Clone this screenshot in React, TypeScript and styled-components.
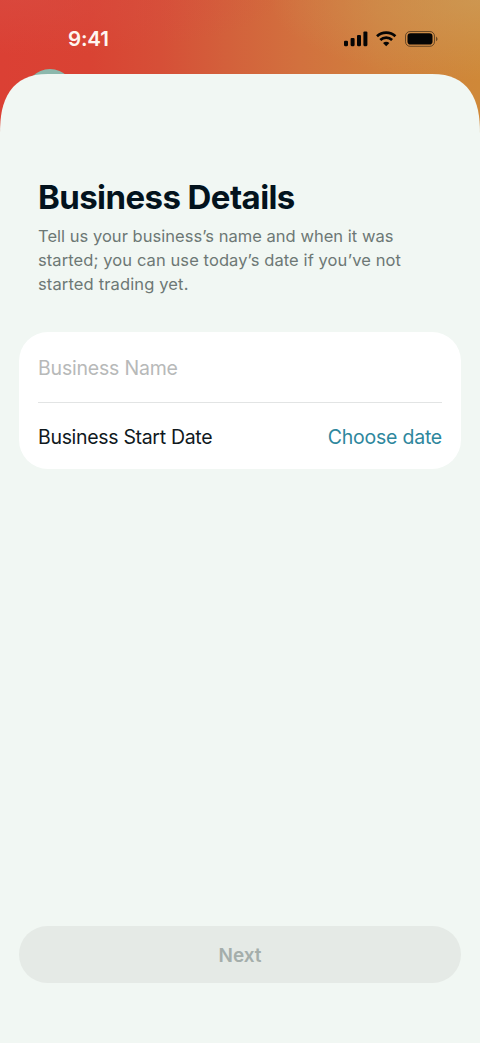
import React from "react";
import styled, { createGlobalStyle } from "styled-components";

const GlobalStyle = createGlobalStyle`
  * { box-sizing: border-box; }
  body { margin: 0; background: #f1f7f3; font-family: Inter, "Liberation Sans", sans-serif; }
`;

const Screen = styled.div`
  display: flex;
  flex-direction: column;
  width: 480px;
  height: 1043px;
  overflow: hidden;
  background:
    radial-gradient(ellipse 210px 80px at 480px 0, rgba(204, 160, 96, 0.6), rgba(204, 160, 96, 0)),
    radial-gradient(ellipse 260px 55px at 20px 0, rgba(216, 78, 68, 0.5), rgba(216, 78, 68, 0)),
    linear-gradient(90deg, #db4034 0, #d94333 90px, #d64f37 160px, #d3603b 225px, #d2713e 300px, #d07f3d 380px, #cf8838 480px);
`;

const StatusBar = styled.header`
  position: relative;
  display: flex;
  justify-content: space-between;
  flex: none;
  height: 74px;
  padding: 26px 42px 0 68px;
`;

const Time = styled.div`
  font-size: 20.5px;
  line-height: 26px;
  font-weight: 580;
  letter-spacing: -0.15px;
  color: #fff6f1;
`;

const StatusIcons = styled.svg`
  display: block;
  width: 94px;
  height: 18px;
  margin-top: 4px;
`;

const Avatar = styled.div`
  position: absolute;
  left: 25px;
  top: 69px;
  width: 50px;
  height: 50px;
  border-radius: 50%;
  background: #8cb8ac;
`;

const Sheet = styled.main`
  position: relative;
  display: flex;
  flex-direction: column;
  flex: 1;
  padding: 103px 19px 60px;
  background: #f1f7f3;
  clip-path: path("M0 60C0 42 2 29 10 17C18 6 29 0 48 0H432C451 0 462 6 470 17C478 29 480 42 480 60V969H0Z");
`;

const Title = styled.h1`
  margin: 0 19px;
  font-size: 33px;
  line-height: 40px;
  font-weight: 700;
  letter-spacing: -0.58px;
  color: #03131d;
  white-space: nowrap;
`;

const DescriptionLine = styled.span<{ $spacing: number }>`
  display: block;
  letter-spacing: ${(p) => p.$spacing}px;
  white-space: nowrap;
`;

const Description = styled.p`
  margin: 7px 19px 0;
  font-size: 16.5px;
  line-height: 24px;
  color: #6d7875;
`;

const Card = styled.section`
  margin-top: 36px;
  padding: 0 19px;
  border-radius: 29px;
  background: #fff;
`;

const Row = styled.div<{ $height: number; $divided?: boolean }>`
  display: flex;
  align-items: center;
  justify-content: space-between;
  height: ${(p) => p.$height}px;
  padding-top: 2px;
  border-bottom: ${(p) => (p.$divided ? "1px solid #e2e4e4" : "0")};
  font-size: 19.5px;
  line-height: 24px;
`;

const Placeholder = styled.span`
  letter-spacing: -0.2px;
  color: #b7b9b9;
`;

const Label = styled.span`
  letter-spacing: -0.32px;
  color: #10191e;
`;

const DateButton = styled.button`
  padding: 0;
  border: 0;
  background: none;
  font: inherit;
  letter-spacing: -0.23px;
  color: #2e879d;
`;

const NextButton = styled.button`
  height: 57px;
  margin-top: auto;
  padding: 1px 0 0;
  border: 0;
  border-radius: 29px;
  background: #e5eae6;
  font-family: inherit;
  font-size: 19px;
  font-weight: 600;
  color: #a4aeab;
`;

export default function App() {
  return (
    <Screen>
      <GlobalStyle />
      <StatusBar>
        <Time>9:41</Time>
        <StatusIcons viewBox="0 0 94 18" fill="none">
          <g fill="#050505">
            <rect x="0" y="10.8" width="4" height="5.4" rx="1.1" />
            <rect x="6.6" y="8" width="4" height="8.2" rx="1.1" />
            <rect x="13" y="5" width="4" height="11.2" rx="1.1" />
            <rect x="19.4" y="1.4" width="4" height="14.8" rx="1.1" />
          </g>
          <g stroke="#050505" strokeWidth="2.7">
            <path d="M33 6.3a13.3 13.3 0 0 1 18.4 0" />
            <path d="M36.3 10a8.6 8.6 0 0 1 11.8 0" />
          </g>
          <path d="M42.2 16.2 39 12.9q3.2-2.5 6.4 0z" fill="#050505" />
          <rect x="61.5" y="1.5" width="29" height="14.8" rx="4.6" stroke="#050505" strokeOpacity=".5" />
          <rect x="63.5" y="3.3" width="25" height="11.2" rx="3.1" fill="#050505" />
          <path d="M92 6.6q3.2 2.3 0 4.6z" fill="#050505" fillOpacity=".5" />
        </StatusIcons>
        <Avatar />
      </StatusBar>
      <Sheet>
        <Title>Business Details</Title>
        <Description>
          <DescriptionLine $spacing={0.03}>Tell us your business’s name and when it was</DescriptionLine>
          <DescriptionLine $spacing={0.09}>started; you can use today’s date if you’ve not</DescriptionLine>
          <DescriptionLine $spacing={0.14}>started trading yet.</DescriptionLine>
        </Description>
        <Card>
          <Row $height={71} $divided>
            <Placeholder>Business Name</Placeholder>
          </Row>
          <Row $height={66}>
            <Label>Business Start Date</Label>
            <DateButton>Choose date</DateButton>
          </Row>
        </Card>
        <NextButton>Next</NextButton>
      </Sheet>
    </Screen>
  );
}
